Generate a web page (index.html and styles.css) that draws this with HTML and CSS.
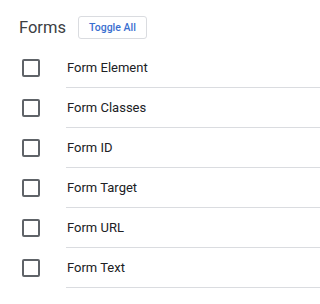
FILE: index.html
```html
<!DOCTYPE html>
<html>
<head>
<meta charset="utf-8">
<link rel="stylesheet" href="styles.css">
</head>
<body>
<div class="panel">
  <div class="header">
    <span class="title">Forms</span>
    <button class="toggle">Toggle All</button>
  </div>
  <ul class="list">
    <li class="row"><span class="box"></span><span class="label">Form Element</span></li>
    <li class="row"><span class="box"></span><span class="label">Form Classes</span></li>
    <li class="row"><span class="box"></span><span class="label">Form ID</span></li>
    <li class="row"><span class="box"></span><span class="label">Form Target</span></li>
    <li class="row"><span class="box"></span><span class="label">Form URL</span></li>
    <li class="row"><span class="box"></span><span class="label">Form Text</span></li>
  </ul>
</div>
</body>
</html>
```
FILE: styles.css
```css
html, body {
  margin: 0;
  padding: 0;
  background: #fff;
}
body {
  font-family: Roboto, "Liberation Sans", sans-serif;
  color: #202124;
}
.panel {
  padding: 16px 0 0 19px;
}
.header {
  display: flex;
  align-items: center;
  gap: 12px;
  height: 23px;
}
.title {
  font-size: 16.5px;
  color: #3c4043;
}
.toggle {
  font-family: Roboto, "Liberation Sans", sans-serif;
  font-size: 10.5px;
  font-weight: 500;
  color: #3a6fd0;
  background: #fff;
  border: 1px solid #dadce0;
  border-radius: 3px;
  height: 23px;
  width: 69px;
  padding: 0;
}
.list {
  list-style: none;
  margin: 9px 0 0 0;
  padding: 0;
}
.row {
  display: flex;
  align-items: center;
  height: 40px;
}
.box {
  box-sizing: border-box;
  width: 18px;
  height: 18px;
  border: 2px solid #5f6368;
  border-radius: 2px;
  margin-left: 3px;
  margin-right: 26px;
}
.label {
  flex: 1;
  align-self: stretch;
  display: flex;
  align-items: center;
  padding-left: 1px;
  font-size: 13px;
  font-weight: 400;
  color: #202124;
  border-bottom: 1px solid #dadce0;
}
```
